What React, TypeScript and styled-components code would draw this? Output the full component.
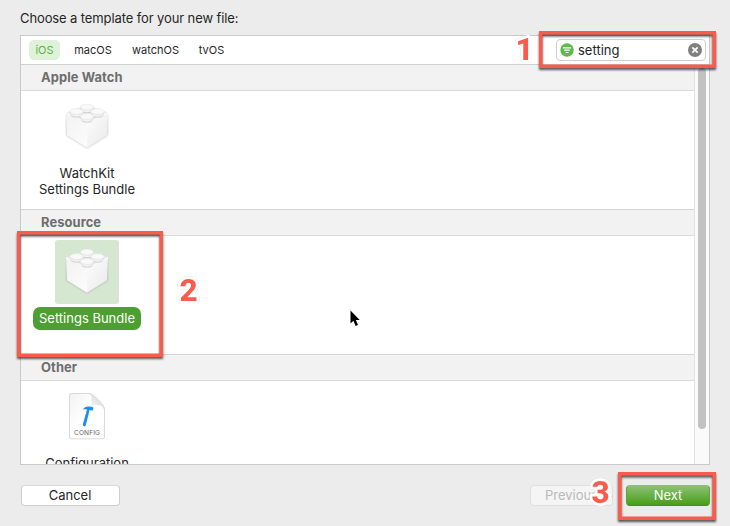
import React from "react";
import styled, { createGlobalStyle, css } from "styled-components";

const GlobalStyle = createGlobalStyle`
  * { box-sizing: border-box; }
  body { margin: 0; background: #ececec; font-family: Inter, "Liberation Sans", sans-serif; color: #262626; }
`;

const Dialog = styled.main`
  position: relative;
  width: 730px;
  height: 526px;
  padding: 9px 20px 0;
  overflow: hidden;
  background: #ececec;
  font-size: 13px;
`;

const Prompt = styled.h1`
  margin: 0;
  height: 26px;
  font-size: 13px;
  line-height: 19px;
  font-weight: 400;
  letter-spacing: -0.11px;
`;

const Panel = styled.section`
  width: 690px;
  height: 430px;
  display: flex;
  flex-direction: column;
  border: 1px solid #c9c9c9;
  background: #fff;
  overflow: hidden;
`;

const Toolbar = styled.header`
  flex: 0 0 29px;
  display: flex;
  align-items: center;
  padding: 0 3px 0 8px;
  border-bottom: 1px solid #cfcfcf;
`;

const Tab = styled.button<{ $active?: boolean; $width: number }>`
  width: ${(p) => p.$width}px;
  height: 20px;
  padding: 0;
  border: 0;
  border-radius: 5px;
  font: 400 11px/20px Inter, sans-serif;
  color: ${(p) => (p.$active ? "#55b63c" : "#262626")};
  background: ${(p) => (p.$active ? "#e0f1da" : "transparent")};
`;

const SearchField = styled.div`
  margin-left: auto;
  width: 150px;
  height: 22px;
  display: flex;
  align-items: center;
  gap: 4px;
  padding: 0 3px;
  border: 1px solid #cfcfcf;
  border-radius: 4px;
  background: #fff;
`;

const SearchText = styled.span`
  flex: 1;
  font-size: 13px;
`;

const Body = styled.div`
  flex: 1;
  display: flex;
  min-height: 0;
`;

const Sections = styled.div`
  flex: 1;
  overflow: hidden;
`;

const Track = styled.div`
  width: 15px;
  padding: 3px 3px 0 3px;
  border-left: 1px solid #e3e3e3;
  background: #fafafa;
`;

const Thumb = styled.div`
  width: 8px;
  height: 361px;
  border-radius: 4px;
  background: #c2c2c2;
`;

const SectionTitle = styled.h2`
  margin: 0;
  height: 26px;
  padding-left: 20px;
  font-size: 12.9px;
  line-height: 25px;
  font-weight: 700;
  letter-spacing: 0.1px;
  color: #6d6d6d;
  background: #f2f2f2;
  border-bottom: 1px solid #dadada;
`;

const SectionContent = styled.div`
  height: 119px;
  padding: 4px 0 0 2px;
  border-bottom: 1px solid #d5d5d5;
`;

const Template = styled.div`
  width: 128px;
  display: flex;
  flex-direction: column;
  align-items: center;
`;

const IconTile = styled.div<{ $selected?: boolean }>`
  width: 64px;
  height: 64px;
  display: flex;
  align-items: center;
  justify-content: center;
  border-radius: 3px;
  background: ${(p) => (p.$selected ? "#d5e7d0" : "transparent")};
`;

const TemplateName = styled.span<{ $selected?: boolean }>`
  margin-top: ${(p) => (p.$selected ? 3 : 6)}px;
  text-align: center;
  line-height: 16px;
  white-space: nowrap;
  ${(p) =>
    p.$selected &&
    css`
      width: 108px;
      height: 23px;
      line-height: 23px;
      border-radius: 7px;
      color: #fff;
      background: #4c9f30;
    `}
`;

const Footer = styled.footer`
  display: flex;
  padding: 20px 0 0 0.5px;
`;

const Button = styled.button<{ $kind?: "primary" | "disabled" }>`
  width: 99px;
  height: 21px;
  padding: 0 0 1px;
  border: 1px solid #cecece;
  border-top-color: #dadada;
  border-radius: 4px;
  font: 400 13px/18px Inter, sans-serif;
  color: #262626;
  background: #fff;
  ${(p) =>
    p.$kind === "disabled" &&
    css`
      width: 83px;
      margin-left: auto;
      color: #b9b9b9;
      background: #f5f5f5;
      border-color: #dfdfdf;
    `}
  ${(p) =>
    p.$kind === "primary" &&
    css`
      width: 84px;
      margin-left: 13px;
      color: #fff;
      background: linear-gradient(#90c27a, #439c12);
      background-origin: border-box;
      border-color: #91bb7e #5da339 #43901c;
    `}
`;

const Callout = styled.div<{ $x: number; $y: number; $w: number; $h: number }>`
  position: absolute;
  left: ${(p) => p.$x}px;
  top: ${(p) => p.$y}px;
  width: ${(p) => p.$w}px;
  height: ${(p) => p.$h}px;
  border: 3px solid #fb5b4d;
  box-shadow: inset 0 0 0 0.5px #fb5b4d;
  filter: drop-shadow(0.5px 2px 1px rgba(0, 0, 0, 0.65));
  pointer-events: none;
`;

const StepLabel = styled.svg<{ $x: number; $y: number }>`
  position: absolute;
  left: ${(p) => p.$x}px;
  top: ${(p) => p.$y}px;
  width: 32px;
  height: 38px;
  filter: drop-shadow(0 0 0.7px rgba(0, 0, 0, 0.25));
  font: 800 31.5px Roboto, sans-serif;
`;

const Pointer = styled.svg`
  position: absolute;
  left: 349px;
  top: 309px;
`;

function Step({ x, y, n }: { x: number; y: number; n: number }) {
  return (
    <StepLabel $x={x} $y={y}>
      <text x="16.500" y="29.500" textAnchor="middle" fill="#fb5b4d" stroke="#fff" strokeWidth="6" strokeLinejoin="round" paintOrder="stroke">{n}</text>
    </StepLabel>
  );
}

function Brick({ id }: { id: string }) {
  const studs = [[22, 5], [11.500, 9.500], [32.500, 9.500], [22, 14.500]];
  return (
    <svg width="44" height="46" viewBox="0 0 44 46">
      <defs>
        <linearGradient id={`${id}l`} x1="0" y1="0" x2="1" y2="1">
          <stop offset="0" stopColor="#f2f2f2" />
          <stop offset="1" stopColor="#fcfcfc" />
        </linearGradient>
        <linearGradient id={`${id}r`} x1="0" y1="0" x2="1" y2="1">
          <stop offset="0" stopColor="#fdfdfd" />
          <stop offset="1" stopColor="#e9e9e9" />
        </linearGradient>
        <linearGradient id={`${id}s`} x1="0" y1="0" x2="0" y2="1">
          <stop offset="0" stopColor="#e4e4e4" />
          <stop offset="1" stopColor="#f5f5f5" />
        </linearGradient>
        <filter id={`${id}b`} x="-20%" y="-20%" width="140%" height="140%">
          <feGaussianBlur stdDeviation="0.8" />
        </filter>
      </defs>
      <path d="M1.500 11v20.300L22 44 42.500 31.300V11z" fill="#777" opacity=".45" filter={`url(#${id}b)`} />
      <path d="M1 8.500 22 1l21 7.500L22 19z" fill="#eaeaea" />
      <path d="M1 8.500 22 19v24.700L2 31.300z" fill={`url(#${id}l)`} />
      <path d="M43 8.500 22 19v24.700l20-12.400z" fill={`url(#${id}r)`} />
      <path d="m1 8.500 21 10.500 21-10.500" fill="none" stroke="#fff" strokeWidth=".8" />
      {studs.map(([x, y]) => (
        <g key={`${x}-${y}`}>
          <path d={`M${x - 6.8} ${y - 1.8}c0 1.500 1 2.700 1.300 4 1.500 2.500 9.500 2.500 11 0 .3-1.300 1.300-2.500 1.300-4z`} fill="#cdcdcd" />
          <path d={`M${x - 6.8} ${y - 2}c0 1.500 1 2.500 1.300 3.500 1.500 2.300 9.500 2.300 11 0 .3-1 1.300-2 1.300-3.500z`} fill={`url(#${id}s)`} />
          <ellipse cx={x} cy={y - 2} rx="6.600" ry="2.900" fill="#f9f9f9" stroke="#dfdfdf" strokeWidth=".5" />
        </g>
      ))}
    </svg>
  );
}

function ConfigFile() {
  return (
    <svg width="38" height="50" viewBox="0 0 38 50">
      <defs>
        <linearGradient id="paper" x1="0" y1="0" x2=".8" y2=".7">
          <stop offset="0" stopColor="#f2f2f2" />
          <stop offset=".6" stopColor="#fff" />
        </linearGradient>
        <linearGradient id="fold" x1="0" y1="1" x2=".7" y2=".3">
          <stop offset="0" stopColor="#fff" />
          <stop offset="1" stopColor="#dcdcdc" />
        </linearGradient>
      </defs>
      <path d="M3.300 1.500h17.700c4 0 15.500 11.200 15.500 16v27.500a1.800 1.800 0 0 1-1.800 1.800H3.300A1.800 1.800 0 0 1 1.500 45V3.300A1.800 1.800 0 0 1 3.300 1.500z" fill="url(#paper)" stroke="#cfcfcf" strokeWidth=".8" />
      <path d="M21 1.500c3.500 1 3.500 5.500 3 10.800 5.500-.5 11.500.5 12.500 5.200 0-4.800-11.500-16-15.500-16z" fill="url(#fold)" stroke="#d9d9d9" strokeWidth=".5" />
      <path d="M14.800 17.500c1.700-3 4.600-3.500 7.300-2.800l.8-.1 2.500.8-.5 3.200-2.400-.4-.9-.1-3.800 15.100c-.6 1.700-3.500 1-2.900-1l4.100-14.600c-1.300-.6-2.900-.6-4.200-.1z" fill="#1d8df0" />
      <text x="19" y="43.300" textAnchor="middle" textLength="26" fontFamily="Inter, sans-serif" fontSize="6.600" fill="#5f5f5f">CONFIG</text>
    </svg>
  );
}

export default function App() {
  return (
    <Dialog>
      <GlobalStyle />
      <Prompt>Choose a template for your new file:</Prompt>
      <Panel>
        <Toolbar>
          <Tab $active $width={31}>iOS</Tab>
          <Tab $width={66}>macOS</Tab>
          <Tab $width={59}>watchOS</Tab>
          <Tab $width={53}>tvOS</Tab>
          <SearchField>
            <svg width="14" height="14" viewBox="0 0 14 14">
              <circle cx="7" cy="7" r="6.700" fill="#5dba43" />
              <path d="M3 4.800h8M4.200 7.200h5.600M5.500 9.500h3" stroke="#fff" strokeWidth="1.200" />
            </svg>
            <SearchText>setting</SearchText>
            <svg width="14" height="14" viewBox="0 0 14 14">
              <circle cx="7" cy="7" r="7" fill="#7f7f7f" />
              <path d="m4.300 4.300 5.400 5.400m0-5.400L4.300 9.700" stroke="#fff" strokeWidth="1.700" />
            </svg>
          </SearchField>
        </Toolbar>
        <Body>
          <Sections>
            <SectionTitle>Apple Watch</SectionTitle>
            <SectionContent>
              <Template>
                <IconTile><Brick id="watch" /></IconTile>
                <TemplateName>WatchKit<br />Settings Bundle</TemplateName>
              </Template>
            </SectionContent>
            <SectionTitle>Resource</SectionTitle>
            <SectionContent>
              <Template>
                <IconTile $selected><Brick id="resource" /></IconTile>
                <TemplateName $selected>Settings Bundle</TemplateName>
              </Template>
            </SectionContent>
            <SectionTitle>Other</SectionTitle>
            <SectionContent>
              <Template>
                <IconTile><ConfigFile /></IconTile>
                <TemplateName>Configuration</TemplateName>
              </Template>
            </SectionContent>
          </Sections>
          <Track><Thumb /></Track>
        </Body>
      </Panel>
      <Footer>
        <Button>Cancel</Button>
        <Button $kind="disabled">Previous</Button>
        <Button $kind="primary">Next</Button>
      </Footer>
      <Callout $x={539} $y={31} $w={177} $h={37} />
      <Callout $x={17} $y={231} $w={146} $h={126} />
      <Callout $x={618} $y={472} $w={98} $h={48} />
      <Step x={508} y={30} n={1} />
      <Step x={172} y={271} n={2} />
      <Step x={584} y={473} n={3} />
      <Pointer width="12" height="20" viewBox="0 0 12 20">
        <path d="M1.500 1.500v13l2.900-2.700 2.200 5.200 2.400-1-2.200-5h3.900z" fill="#000" stroke="#fff" strokeWidth="1.200" paintOrder="stroke" />
      </Pointer>
    </Dialog>
  );
}
